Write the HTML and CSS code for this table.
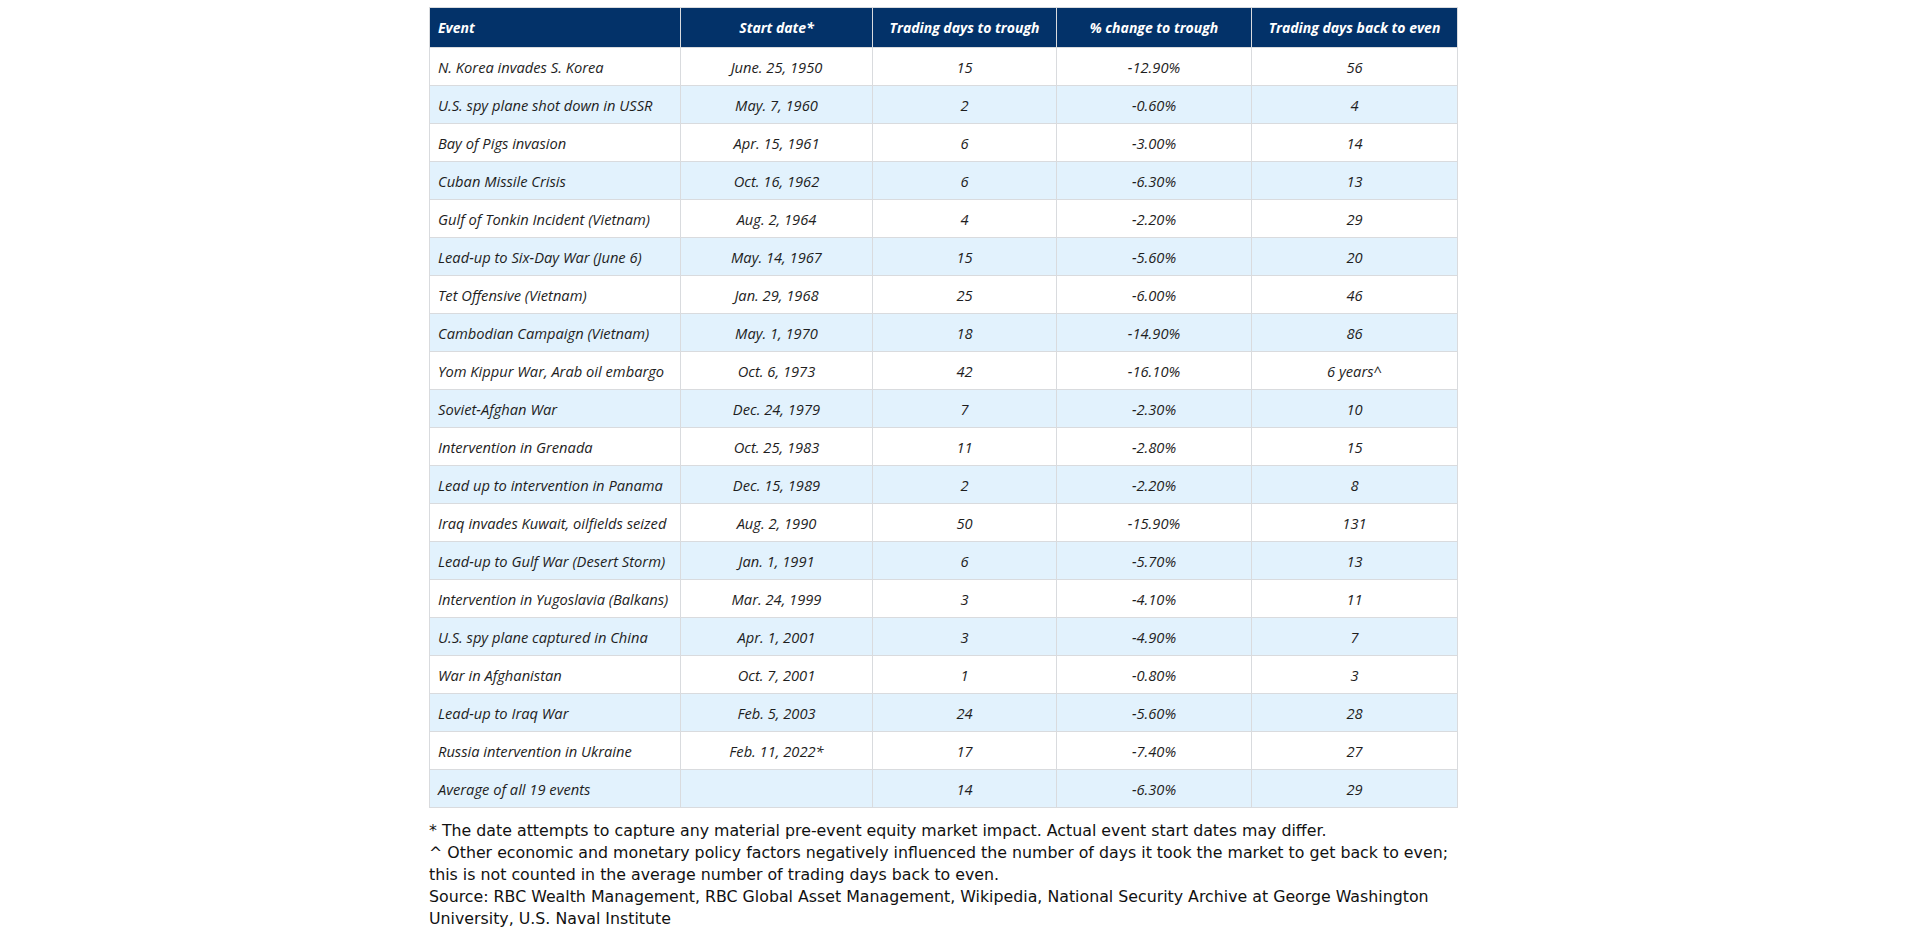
FILE: index.html
```html
<!DOCTYPE html>
<html>
<head>
<meta charset="utf-8">
<link rel="stylesheet" href="styles.css">
</head>
<body>
<div class="wrap">
<table class="events">
<colgroup>
<col class="c1"><col class="c2"><col class="c3"><col class="c4"><col class="c5">
</colgroup>
<thead>
<tr><th class="left">Event</th><th>Start date*</th><th>Trading days to trough</th><th>% change to trough</th><th>Trading days back to even</th></tr>
</thead>
<tbody>
<tr><td class="left">N. Korea invades S. Korea</td><td>June. 25, 1950</td><td>15</td><td>-12.90%</td><td>56</td></tr>
<tr><td class="left">U.S. spy plane shot down in USSR</td><td>May. 7, 1960</td><td>2</td><td>-0.60%</td><td>4</td></tr>
<tr><td class="left">Bay of Pigs invasion</td><td>Apr. 15, 1961</td><td>6</td><td>-3.00%</td><td>14</td></tr>
<tr><td class="left">Cuban Missile Crisis</td><td>Oct. 16, 1962</td><td>6</td><td>-6.30%</td><td>13</td></tr>
<tr><td class="left">Gulf of Tonkin Incident (Vietnam)</td><td>Aug. 2, 1964</td><td>4</td><td>-2.20%</td><td>29</td></tr>
<tr><td class="left">Lead-up to Six-Day War (June 6)</td><td>May. 14, 1967</td><td>15</td><td>-5.60%</td><td>20</td></tr>
<tr><td class="left">Tet Offensive (Vietnam)</td><td>Jan. 29, 1968</td><td>25</td><td>-6.00%</td><td>46</td></tr>
<tr><td class="left">Cambodian Campaign (Vietnam)</td><td>May. 1, 1970</td><td>18</td><td>-14.90%</td><td>86</td></tr>
<tr><td class="left">Yom Kippur War, Arab oil embargo</td><td>Oct. 6, 1973</td><td>42</td><td>-16.10%</td><td>6 years^</td></tr>
<tr><td class="left">Soviet-Afghan War</td><td>Dec. 24, 1979</td><td>7</td><td>-2.30%</td><td>10</td></tr>
<tr><td class="left">Intervention in Grenada</td><td>Oct. 25, 1983</td><td>11</td><td>-2.80%</td><td>15</td></tr>
<tr><td class="left">Lead up to intervention in Panama</td><td>Dec. 15, 1989</td><td>2</td><td>-2.20%</td><td>8</td></tr>
<tr><td class="left">Iraq invades Kuwait, oilfields seized</td><td>Aug. 2, 1990</td><td>50</td><td>-15.90%</td><td>131</td></tr>
<tr><td class="left">Lead-up to Gulf War (Desert Storm)</td><td>Jan. 1, 1991</td><td>6</td><td>-5.70%</td><td>13</td></tr>
<tr><td class="left">Intervention in Yugoslavia (Balkans)</td><td>Mar. 24, 1999</td><td>3</td><td>-4.10%</td><td>11</td></tr>
<tr><td class="left">U.S. spy plane captured in China</td><td>Apr. 1, 2001</td><td>3</td><td>-4.90%</td><td>7</td></tr>
<tr><td class="left">War in Afghanistan</td><td>Oct. 7, 2001</td><td>1</td><td>-0.80%</td><td>3</td></tr>
<tr><td class="left">Lead-up to Iraq War</td><td>Feb. 5, 2003</td><td>24</td><td>-5.60%</td><td>28</td></tr>
<tr><td class="left">Russia intervention in Ukraine</td><td>Feb. 11, 2022*</td><td>17</td><td>-7.40%</td><td>27</td></tr>
<tr><td class="left">Average of all 19 events</td><td></td><td>14</td><td>-6.30%</td><td>29</td></tr>
</tbody>
</table>
<div class="notes">
<p>* The date attempts to capture any material pre-event equity market impact. Actual event start dates may differ.</p>
<p>^ Other economic and monetary policy factors negatively influenced the number of days it took the market to get back to even; this is not counted in the average number of trading days back to even.</p>
<p>Source: RBC Wealth Management, RBC Global Asset Management, Wikipedia, National Security Archive at George Washington University, U.S. Naval Institute</p>
</div>
</div>
</body>
</html>
```
FILE: styles.css
```css
html, body {
  margin: 0;
  padding: 0;
  background: #ffffff;
}
.wrap {
  width: 1028px;
  margin-left: 429px;
  padding-top: 7px;
}
.events {
  border-collapse: collapse;
  table-layout: fixed;
  width: 1028px;
  font-family: "Open Sans", "Noto Sans", sans-serif;
  font-style: italic;
  font-size: 14.7px;
  color: #1e1e1e;
}
.c1 { width: 251px; }
.c2 { width: 192px; }
.c3 { width: 184px; }
.c4 { width: 195px; }
.c5 { width: 206px; }
.events th, .events td {
  border: 1px solid #d9dbde;
  text-align: center;
  padding: 0 8px;
  white-space: nowrap;
}
.events th {
  background: #033269;
  color: #ffffff;
  font-weight: 700;
  font-size: 14px;
  height: 39px;
}
.events td {
  height: 37px;
}
.events .left {
  text-align: left;
}
.events tbody tr:nth-child(even) td {
  background: #e2f2fd;
}
.notes {
  width: 1045px;
  margin-top: 12px;
  font-family: "DejaVu Sans", sans-serif;
  font-size: 15.8px;
  line-height: 22px;
  color: #111111;
}
.notes p {
  margin: 0;
}
```
